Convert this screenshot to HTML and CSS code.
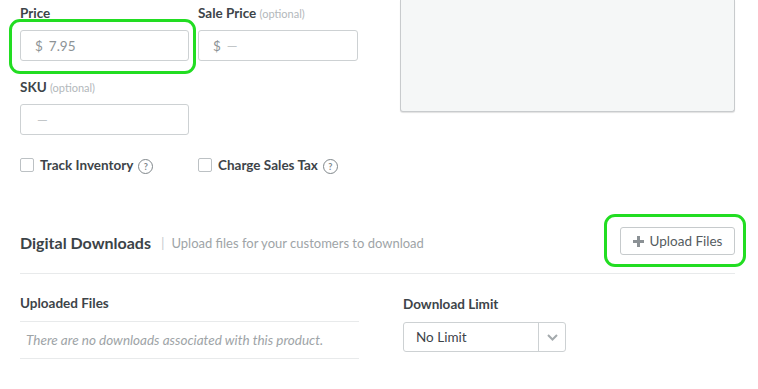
FILE: index.html
```html
<!DOCTYPE html>
<html lang="en">
<head>
    <meta charset="UTF-8">
    <title>Product - Digital Downloads</title>
    <link rel="stylesheet" href="styles.css">
</head>
<body>
    <div class="page">
        <div class="top">
            <div class="pricing">
                <div class="field-row">
                    <div class="field field-price">
                        <label>Price</label>
                        <div class="highlight highlight-price">
                            <div class="input"><span class="prefix">$</span><span class="value">7.95</span></div>
                        </div>
                    </div>
                    <div class="field field-sale">
                        <label>Sale Price <span class="optional">(optional)</span></label>
                        <div class="input"><span class="prefix">$</span><span class="placeholder">—</span></div>
                    </div>
                </div>

                <div class="field field-sku">
                    <label>SKU <span class="optional">(optional)</span></label>
                    <div class="input"><span class="placeholder sku-ph">—</span></div>
                </div>

                <div class="check-row">
                    <label class="check check-track">
                        <span class="box"></span>
                        <span class="check-text">Track Inventory</span>
                        <span class="help">?</span>
                    </label>
                    <label class="check">
                        <span class="box"></span>
                        <span class="check-text">Charge Sales Tax</span>
                        <span class="help">?</span>
                    </label>
                </div>
            </div>

            <div class="description"></div>
        </div>

        <!-- Digital downloads -->
        <div class="section-head">
            <h2>Digital Downloads</h2>
            <span class="sep">|</span>
            <span class="subtitle">Upload files for your customers to download</span>
            <div class="highlight highlight-upload">
                <button class="upload-btn">
                    <svg width="11" height="11" viewBox="0 0 11 11"><rect x="4" y="0" width="3" height="11" fill="#8b9195"/><rect x="0" y="4" width="11" height="3" fill="#8b9195"/></svg>
                    Upload Files
                </button>
            </div>
        </div>

        <div class="bottom">
            <div class="files">
                <div class="col-title files-title">Uploaded Files</div>
                <div class="empty">There are no downloads associated with this product.</div>
            </div>
            <div class="limit">
                <div class="col-title">Download Limit</div>
                <div class="select">
                    <span class="select-value">No Limit</span>
                    <span class="select-arrow">
                        <svg width="11" height="7" viewBox="0 0 11 7"><polyline points="1,1 5.5,5.5 10,1" fill="none" stroke="#a4aaad" stroke-width="2"/></svg>
                    </span>
                </div>
            </div>
        </div>
    </div>
</body>
</html>
```

FILE: styles.css
```css
* {
    margin: 0;
    padding: 0;
    box-sizing: border-box;
}

body {
    font-family: 'Lato', 'Liberation Sans', sans-serif;
    background: #fff;
    color: #3d4449;
}

.page {
    width: 758px;
    padding: 5px 23px 0 20px;
}

.top {
    display: flex;
    justify-content: space-between;
}

.pricing {
    width: 339px;
}

.field-row {
    display: flex;
    gap: 9px;
}

.field label,
.col-title {
    display: block;
    font-size: 13.5px;
    font-weight: 700;
    line-height: 16px;
    color: #3d4449;
}

.field label {
    margin-bottom: 9px;
}

.optional {
    font-size: 11px;
    font-weight: 400;
    line-height: 1;
    color: #b3b8bb;
}

.field-price {
    width: 169px;
}

.field-sale {
    width: 160px;
}

.input {
    height: 31px;
    border: 1px solid #cdd1d3;
    border-radius: 3px;
    display: flex;
    align-items: center;
    padding-left: 14px;
    font-size: 13.5px;
    color: #8d9396;
    background: #fff;
}

.prefix {
    margin-right: 6px;
}

.placeholder {
    color: #c2c6c8;
}

.sku-ph {
    margin-left: 2px;
}

.highlight {
    position: relative;
}

.highlight::after {
    content: "";
    position: absolute;
    border: 3px solid #22dd22;
    border-radius: 11px;
    pointer-events: none;
}

.highlight-price::after {
    top: -11px;
    bottom: -13px;
    left: -11px;
    right: -7px;
}

.field-sku {
    width: 169px;
    margin-top: 18px;
}

.check-row {
    display: flex;
    margin-top: 22px;
    height: 16px;
    align-items: center;
}

.check {
    display: flex;
    align-items: center;
    font-size: 13.5px;
    font-weight: 700;
    color: #3d4449;
}

.check-track {
    width: 178px;
}

.box {
    width: 14px;
    height: 14px;
    border: 1px solid #bcc1c4;
    border-radius: 2px;
    margin-right: 6px;
}

.help {
    width: 15px;
    height: 15px;
    border: 1px solid #80878b;
    border-radius: 50%;
    font-size: 9px;
    font-weight: 700;
    color: #80878b;
    display: flex;
    align-items: center;
    justify-content: center;
    margin-left: 5px;
    margin-top: 3px;
}

.description {
    width: 335px;
    height: 112px;
    margin-top: -5px;
    background: #f5f7f7;
    border: 1px solid #c8cbcd;
    border-top: none;
    border-radius: 0 0 3px 3px;
    box-shadow: 0 1px 1px rgba(0, 0, 0, 0.12);
}

.section-head {
    display: flex;
    align-items: center;
    margin-top: 54px;
    padding-bottom: 18px;
    border-bottom: 1px solid #e8eaeb;
}

.section-head h2 {
    font-size: 16px;
    font-weight: 700;
    color: #3b4347;
    line-height: 20px;
    margin-top: 3px;
}

.sep {
    color: #c9cdcf;
    font-size: 14px;
    margin: 3px 7px 0 10px;
}

.subtitle {
    font-size: 13px;
    color: #9ea4a7;
    margin-top: 3px;
}

.highlight-upload {
    margin-left: auto;
}

.highlight-upload::after {
    top: -13px;
    bottom: -12px;
    left: -16px;
    right: -11px;
}

.upload-btn {
    height: 28px;
    width: 115px;
    border: 1px solid #c6cacc;
    border-radius: 3px;
    background: #fff;
    font-family: inherit;
    font-size: 13.5px;
    color: #555c60;
    display: flex;
    align-items: center;
    justify-content: center;
    gap: 6px;
}

.bottom {
    display: flex;
    margin-top: 21px;
}

.files {
    width: 339px;
}

.files-title {
    padding-bottom: 10px;
    border-bottom: 1px solid #e8eaeb;
}

.empty {
    height: 37px;
    line-height: 36px;
    padding-left: 6px;
    font-size: 13.5px;
    font-style: italic;
    color: #9ea4a7;
    border-bottom: 1px solid #e8eaeb;
}

.limit {
    margin-left: 44px;
    padding-top: 1px;
}

.limit .col-title {
    margin-bottom: 10px;
}

.select {
    width: 163px;
    height: 30px;
    border: 1px solid #cdd1d3;
    border-radius: 3px;
    display: flex;
    align-items: center;
    font-size: 13.5px;
    color: #3d4449;
}

.select-value {
    flex: 1;
    padding-left: 12px;
}

.select-arrow {
    width: 27px;
    height: 100%;
    border-left: 1px solid #cdd1d3;
    display: flex;
    align-items: center;
    justify-content: center;
}
```
